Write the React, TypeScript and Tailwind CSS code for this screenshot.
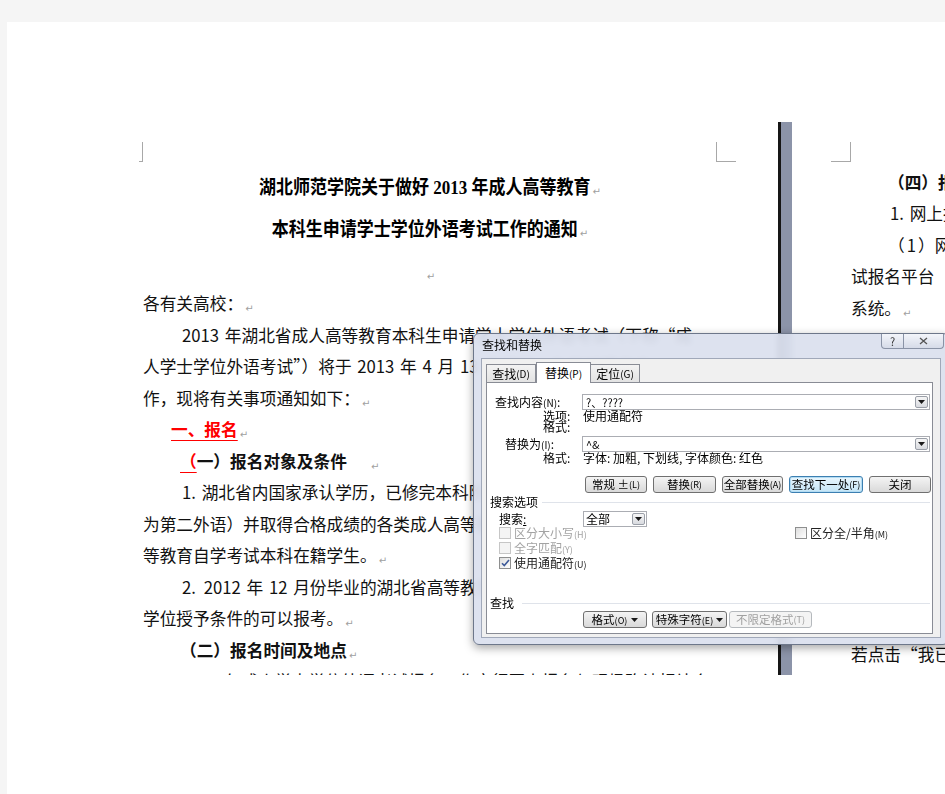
import React from "react";

const cjk = "font-['Noto_Sans_CJK_SC','Noto_Sans',sans-serif]";

function Mark() {
  return (
    <span className="ml-[2px] align-[-2px] font-['DejaVu_Sans',sans-serif] text-[10px] font-normal text-[#a0a0a0]">
      ↵
    </span>
  );
}

// Latin runs get a little extra room, as Word's autospace does
function N({ children }: { children: React.ReactNode }) {
  return <span className="px-[2px]">{children}</span>;
}

function Row({ className = "", children }: { className?: string; children?: React.ReactNode }) {
  return <div className={`h-[31.5px] whitespace-nowrap leading-[31.5px] ${className}`}>{children}</div>;
}

function LeftPage() {
  return (
    <div className="w-[771px] shrink-0 pl-[136px] pt-[120px] text-[16.7px] text-[#111]">
      <div className="-ml-[4px] flex w-[597px] justify-between">
        <div className="h-[20px] w-[4px] border-r border-b border-[#a8a8a8]" />
        <div className="h-[20px] w-[20px] border-l border-b border-[#a8a8a8]" />
      </div>

      <div className="mt-[5px] w-[574px] text-center font-['Liberation_Serif','Noto_Sans_CJK_SC',serif] text-[17px] font-bold text-black">
        <div className="h-[42px] leading-[42px]">
          <span className="inline-block scale-y-[1.15]">湖北师范学院关于做好 2013 年成人高等教育</span>
          <Mark />
        </div>
        <div className="h-[42px] leading-[42px]">
          <span className="inline-block scale-y-[1.15]">本科生申请学士学位外语考试工作的通知</span>
          <Mark />
        </div>
      </div>
      <div className="h-[37px] w-[574px] pt-[10px] text-center leading-[20px]">
        <Mark />
      </div>

      <div className="w-[600px] overflow-hidden">
        <Row>
          各有关高校：
          <Mark />
        </Row>
        <Row className="pl-[37px]">
          <N>2013</N> 年湖北省成人高等教育本科生申请学士学位外语考试（下称“成
        </Row>
        <Row>
          人学士学位外语考试”）将于 <N>2013</N> 年 <N>4</N> 月 <N>13</N> 日举行，为做好报名工
        </Row>
        <Row>
          作，现将有关事项通知如下：
          <Mark />
        </Row>
        <Row className="pl-[28px]">
          <span className="font-['Liberation_Serif','Noto_Sans_CJK_SC',serif] font-bold text-[#ff0000] underline decoration-[#ff0000] underline-offset-[4px]">
            一、报名
          </span>
          <Mark />
        </Row>
        <Row className="pl-[37px] font-bold">
          <span className="text-[#ff0000] underline decoration-[#ff0000] underline-offset-[4px]">（</span>
          一）报名对象及条件
          <span className="ml-[22px]" />
          <Mark />
        </Row>
        <Row className="pl-[37px]">
          <N>1.</N> 湖北省内国家承认学历，已修完本科阶段外语课程（英语、日语、俄语作
        </Row>
        <Row>为第二外语）并取得合格成绩的各类成人高等教育本科在籍学生和高</Row>
        <Row>
          等教育自学考试本科在籍学生。
          <Mark />
        </Row>
        <Row className="pl-[37px]">
          <N>2.</N> <N>2012</N> 年 <N>12</N> 月份毕业的湖北省高等教育自学考试本科毕业生，符合
        </Row>
        <Row>
          学位授予条件的可以报考。
          <Mark />
        </Row>
        <Row className="pl-[37px] font-bold">
          （二）报名时间及地点
          <Mark />
        </Row>
        <Row className="pl-[37px]">
          <N>2013</N> 年成人学士学位外语考试报名工作实行网上报名与现场确认相结合
        </Row>
      </div>
    </div>
  );
}

function Splitter() {
  return (
    <div className="mt-[100px] flex h-[553px] w-[14px] shrink-0">
      <div className="w-[3px] bg-[#161616]" />
      <div className="flex-1 bg-[#8c94a9]" />
    </div>
  );
}

function RightPage() {
  return (
    <div className="min-w-0 flex-1 pl-[39px] pt-[120px] text-[16.7px] text-[#111]">
      <div className="h-[20px] w-[20px] border-r border-b border-[#a8a8a8]" />
      <div className="mt-[4.75px] w-[400px] pl-[20px]">
        <Row className="pl-[37px] font-bold">（四）报名流程</Row>
        <Row className="pl-[37px]">
          <N>1.</N> 网上报名
        </Row>
        <Row className="pl-[37px]">（<N>1</N>）网上报名时间</Row>
        <Row>
          试报名平台<span className="inline-block w-[60px]" />http://www.hbea.edu.cn
        </Row>
        <Row>
          系统。
          <Mark />
        </Row>
        {/* lines hidden behind the dialog */}
        <div className="h-[315px]" />
        <Row>若点击“我已阅读</Row>
      </div>
    </div>
  );
}

function Mn({ k, small }: { k: string; small?: boolean }) {
  return <span className={small ? "text-[9px]" : "text-[10px]"}>({k})</span>;
}

function Arrow() {
  return (
    <svg width="7" height="4" viewBox="0 0 7 4">
      <path d="M0 0h7L3.5 4z" fill="#1a1a1a" />
    </svg>
  );
}

function DropBtn() {
  return (
    <span className="mr-[1px] flex h-[12px] w-[13px] items-center justify-center rounded-[2px] border border-[#9a9fa8] bg-linear-to-b from-[#f6f6f6] to-[#d9dbe0]">
      <Arrow />
    </span>
  );
}

function Combo({ value }: { value: string }) {
  return (
    <div className="flex h-[16px] w-[348px] items-center border border-[#abadb3] bg-white">
      <span className="flex-1 pl-[3px] text-[11px] leading-[14px]">{value}</span>
      <DropBtn />
    </div>
  );
}

function Btn({
  className = "",
  children,
  primary,
  disabled,
}: {
  className?: string;
  children?: React.ReactNode;
  primary?: boolean;
  disabled?: boolean;
}) {
  const tone = disabled
    ? "border-[#b5b9bd] bg-[#f4f4f4] text-[#a0a0a0]"
    : primary
      ? "border-[#3c7fb1] bg-linear-to-b from-[#eaf6fd] to-[#c4e5f6] shadow-[inset_0_0_0_1px_#b3dcf3] text-black"
      : "border-[#707070] bg-linear-to-b from-[#f4f4f4] to-[#d9d9d9] text-black";
  return (
    <div
      className={`flex h-[17px] shrink-0 items-center justify-center whitespace-nowrap rounded-[3px] border text-[11.5px] leading-[15px] ${tone} ${className}`}
    >
      {children}
    </div>
  );
}

function Check({
  label,
  checked,
  disabled,
  className = "",
}: {
  label: React.ReactNode;
  checked?: boolean;
  disabled?: boolean;
  className?: string;
}) {
  return (
    <div className={`flex h-[15px] items-start whitespace-nowrap ${className}`}>
      <span
        className={`flex h-[12px] w-[12px] items-center justify-center border ${
          disabled ? "border-[#c6c6c6] bg-[#f4f4f4]" : "border-[#8e8f8f] bg-linear-to-br from-[#dedede] to-white"
        }`}
      >
        {checked && (
          <svg width="9" height="8" viewBox="0 0 9 8">
            <path d="M1 4.2l2.3 2.4L8 1" fill="none" stroke="#3d5a99" strokeWidth="1.6" />
          </svg>
        )}
      </span>
      <span className={`ml-[3px] text-[12px] leading-[12px] ${disabled ? "text-[#a3a3a3]" : "text-[#222]"}`}>
        {label}
      </span>
    </div>
  );
}

function Dialog() {
  return (
    <div
      className={`absolute left-[473px] top-[333px] h-[312px] w-[476px] rounded-[6px] border border-[#6d778a] bg-[#dadfee]/92 shadow-[0_3px_10px_rgba(0,0,0,0.35)] backdrop-blur-[3px] ${cjk}`}
    >
      <div className="flex h-[24px] justify-between">
        <span className="pl-[8px] pt-[3px] text-[12px] leading-[16px] text-black">查找和替换</span>
        <div className="flex pr-[4px]">
          <div className="flex h-[15px] w-[23px] items-center justify-center rounded-bl-[4px] border border-t-0 border-[#8a93a6] bg-linear-to-b from-[#f3f5fa] to-[#d6dbe8] text-[11px] leading-none text-[#333]">
            ?
          </div>
          <div className="flex h-[15px] w-[40px] items-center justify-center rounded-br-[4px] border border-t-0 border-l-0 border-[#8a93a6] bg-linear-to-b from-[#f3f5fa] to-[#d6dbe8]">
            <svg width="9" height="8" viewBox="0 0 9 8">
              <path d="M1 1l7 6M8 1L1 7" stroke="#555" strokeWidth="1.3" fill="none" />
            </svg>
          </div>
        </div>
      </div>

      <div className="mx-[7px] h-[280px] border border-[#a0a8b9] bg-[#f0f0f0] px-[4px] pt-[2px] text-[12px] text-black">
        <div className="flex h-[21px] items-end">
          <div className="flex h-[18px] w-[50px] items-center justify-center border border-b-0 border-[#898c95] bg-linear-to-b from-[#f3f3f3] to-[#e3e3e3]">
            查找<Mn k="D" />
          </div>
          <div className="relative z-10 -mb-px flex h-[21px] w-[55px] items-center justify-center border border-b-0 border-[#898c95] bg-white">
            替换<Mn k="P" />
          </div>
          <div className="flex h-[18px] w-[49px] items-center justify-center border border-b-0 border-l-0 border-[#898c95] bg-linear-to-b from-[#f3f3f3] to-[#e3e3e3]">
            定位<Mn k="G" />
          </div>
        </div>

        <div className="h-[252px] w-[447px] border border-[#898c95] bg-white pl-[8px] pt-[11px]">
          <div className="flex h-[16px] items-center">
            <span className="w-[87px]">
              查找内容<Mn k="N" />:
            </span>
            <Combo value="?、????" />
          </div>
          <div className="pl-[48px] text-[12px] leading-[11px]">
            <div className="flex">
              <span className="w-[40px]">选项:</span>
              <span>使用通配符</span>
            </div>
            <div>格式:</div>
          </div>
          <div className="mt-[4px] flex h-[16px] items-center">
            <span className="w-[87px] pl-[10px]">
              替换为<Mn k="I" />:
            </span>
            <Combo value="^&" />
          </div>
          <div className="flex pl-[48px] leading-[12px]">
            <span className="w-[40px]">格式:</span>
            <span>字体: 加粗, 下划线, 字体颜色: 红色</span>
          </div>

          <div className="mt-[12px] flex gap-[6px] pl-[90px]">
            <Btn className="w-[62px]">
              常规 ± <Mn k="L" small />
            </Btn>
            <Btn className="w-[63px]">
              替换<Mn k="R" small />
            </Btn>
            <Btn className="w-[61px]">
              全部替换<Mn k="A" small />
            </Btn>
            <Btn className="w-[74px]" primary>
              查找下一处<Mn k="F" small />
            </Btn>
            <Btn className="w-[62px]">关闭</Btn>
          </div>

          <div className="-ml-[5px] mt-[2px] flex h-[14px] items-center pr-[2px]">
            <span>搜索选项</span>
            <span className="ml-[4px] h-px flex-1 bg-[#dfe3ea]" />
          </div>
          <div className="mt-[2px] flex h-[16px] items-center pl-[4px]">
            <span className="w-[84px]">
              搜索<span className="underline">:</span>
            </span>
            <div className="flex h-[16px] w-[64px] items-center border border-[#abadb3] bg-white">
              <span className="flex-1 pl-[2px]">全部</span>
              <DropBtn />
            </div>
          </div>
          <div className="flex pl-[4px]">
            <div className="w-[296px]">
              <Check disabled label={<>区分大小写<Mn k="H" small /></>} />
              <Check disabled label={<>全字匹配<Mn k="Y" small /></>} />
              <Check checked label={<>使用通配符<Mn k="U" small /></>} />
            </div>
            <Check label={<>区分全/半角<Mn k="M" small /></>} />
          </div>

          <div className="-ml-[5px] mt-[24px] flex h-[14px] items-center pr-[2px]">
            <span>查找</span>
            <span className="ml-[8px] h-px flex-1 bg-[#dfe3ea]" />
          </div>
          <div className="mt-px flex pl-[88px]">
            <Btn className="w-[64px] gap-[4px]">
              <span>
                格式<Mn k="O" small />
              </span>
              <Arrow />
            </Btn>
            <Btn className="ml-[5px] w-[75px] gap-[3px]">
              <span>
                特殊字符<Mn k="E" small />
              </span>
              <Arrow />
            </Btn>
            <Btn className="ml-[2px] w-[83px]" disabled>
              不限定格式<Mn k="T" small />
            </Btn>
          </div>
        </div>
      </div>
    </div>
  );
}

export default function App() {
  return (
    <div className={`relative h-[794px] w-[945px] overflow-hidden bg-[#f5f5f5] ${cjk}`}>
      <div className="h-full pl-[7px] pt-[22px]">
        <div className="h-full bg-white">
          <div className="flex h-[653px] overflow-hidden">
            <LeftPage />
            <Splitter />
            <RightPage />
          </div>
        </div>
      </div>
      <Dialog />
    </div>
  );
}
